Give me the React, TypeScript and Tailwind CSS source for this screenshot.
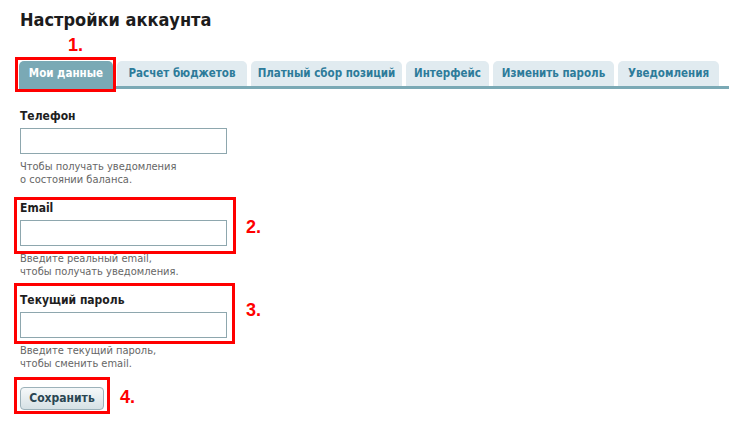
import React from "react";

const tabs = [
  { label: "Мои данные", w: "w-[94px]", active: true },
  { label: "Расчет бюджетов", w: "w-[130px]" },
  { label: "Платный сбор позиций", w: "w-[151px]" },
  { label: "Интерфейс", w: "w-[83px]" },
  { label: "Изменить пароль", w: "w-[121px]" },
  { label: "Уведомления", w: "w-[101px]" },
];

function Field({ label, help }: { label: string; help: string[] }) {
  return (
    <div className="flex flex-col">
      <div className="text-[12px] leading-[15px] font-bold text-[#1e1e1e]">{label}</div>
      <input className="mt-[4px] w-[207px] h-[26px] border border-[#8ea7ae] bg-white outline-none" />
      <div className="mt-[6px] text-[11px] leading-[13px] text-[#666]">
        {help.map((h) => (
          <div key={h}>{h}</div>
        ))}
      </div>
    </div>
  );
}

function Num({ n, cls }: { n: string; cls: string }) {
  return (
    <div className={`absolute text-[18px] leading-[20px] font-bold text-[#ff0000] ${cls}`} style={{ fontFamily: '"Liberation Sans", Arial, sans-serif' }}>
      {n}
    </div>
  );
}

export default function App() {
  return (
    <div
      className="relative w-[729px] h-[424px] bg-white overflow-hidden"
      style={{ fontFamily: '"DejaVu Sans Condensed", "DejaVu Sans", sans-serif', fontStretch: "condensed" }}
    >
      <h1 className="pl-[20px] pt-[9px] text-[18px] leading-[22px] font-bold text-[#1c1c1c]">Настройки аккаунта</h1>

      <div className="mt-[30px] ml-[19px] flex gap-[4px] border-b-[3px] border-[#7aa9b5]">
        {tabs.map((t) => (
          <div
            key={t.label}
            className={`${t.w} h-[25px] flex items-center justify-center rounded-t-[5px] text-[11.5px] font-bold whitespace-nowrap ${
              t.active ? "bg-[#7aa9b5] text-white" : "bg-[#e1ebf0] text-[#2d7b9a]"
            }`}
          >
            {t.label}
          </div>
        ))}
      </div>

      <div className="pl-[20px] pt-[20px] flex flex-col gap-[15px]">
        <Field label="Телефон" help={["Чтобы получать уведомления", "о состоянии баланса."]} />
        <Field label="Email" help={["Введите реальный email,", "чтобы получать уведомления."]} />
        <Field label="Текущий пароль" help={["Введите текущий пароль,", "чтобы сменить email."]} />
        <div>
          <button className="w-[84px] h-[23px] rounded-[4px] border border-[#9cb1b9] bg-gradient-to-b from-[#f5f8f9] to-[#d6e1e5] text-[12px] font-bold text-[#2a4652]">
            Сохранить
          </button>
        </div>
      </div>

      {/* annotations */}
      <div className="absolute left-[15px] top-[57px] w-[101px] h-[35px] border-[3px] border-[#ff0000]" />
      <div className="absolute left-[14px] top-[197px] w-[222px] h-[57px] border-[3px] border-[#ff0000]" />
      <div className="absolute left-[14px] top-[283px] w-[221px] h-[61px] border-[3px] border-[#ff0000]" />
      <div className="absolute left-[14px] top-[377px] w-[96px] h-[37px] border-[3px] border-[#ff0000]" />
      <Num n="1." cls="left-[68px] top-[35px]" />
      <Num n="2." cls="left-[246px] top-[217px]" />
      <Num n="3." cls="left-[246px] top-[300px]" />
      <Num n="4." cls="left-[120px] top-[387px]" />
    </div>
  );
}
